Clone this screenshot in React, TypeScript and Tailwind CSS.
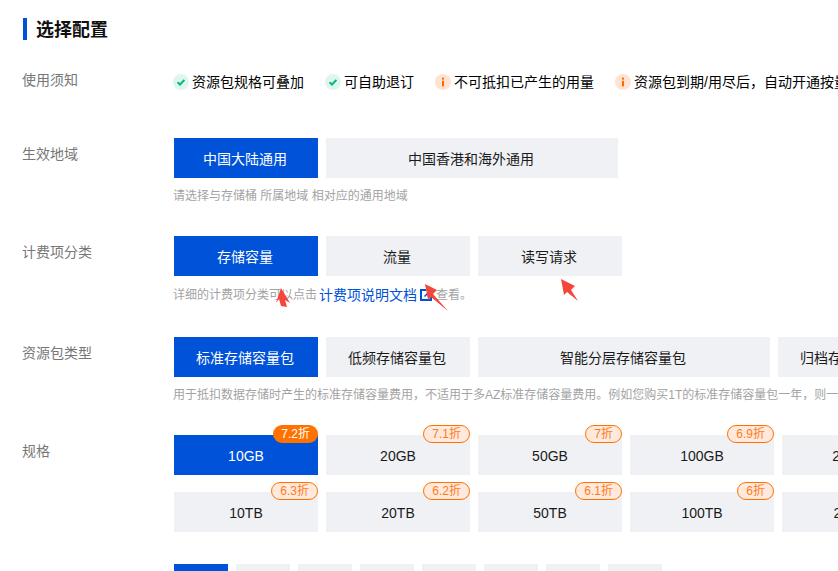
import React from 'react';

const NOTICES = [
  { text: '资源包规格可叠加', ok: true },
  { text: '可自助退订', ok: true },
  { text: '不可抵扣已产生的用量', ok: false },
  { text: '资源包到期/用尽后，自动开通按量计费', ok: false },
];

const SPECS = [
  [
    { name: '10GB', off: '7.2折' },
    { name: '20GB', off: '7.1折' },
    { name: '50GB', off: '7折' },
    { name: '100GB', off: '6.9折' },
    { name: '200GB', off: '' },
  ],
  [
    { name: '10TB', off: '6.3折' },
    { name: '20TB', off: '6.2折' },
    { name: '50TB', off: '6.1折' },
    { name: '100TB', off: '6折' },
    { name: '200TB', off: '' },
  ],
];

const NoticeIcon = ({ ok }: { ok: boolean }) => (
  <svg width="16" height="16" viewBox="0 0 16 16" className="shrink-0">
    <circle cx="8" cy="8" r="8" fill={ok ? '#dff6ee' : '#ffe3d2'} />
    {ok ? (
      <path d="M4.6 8.2l2.4 2.3 4.4-4.6" fill="none" stroke="#00b97c" strokeWidth="2" />
    ) : (
      <>
        <rect x="7" y="3.6" width="2" height="2" fill="#ff6a00" />
        <rect x="7" y="6.8" width="2" height="5.6" fill="#ff6a00" />
      </>
    )}
  </svg>
);

const Option = ({
  label,
  active,
  wide,
  badge,
}: {
  label: string;
  active?: boolean;
  wide?: boolean;
  badge?: string;
}) => (
  <div
    className={`relative shrink-0 h-10 pt-px flex items-center justify-center text-sm ${wide ? 'w-[292px]' : 'w-36'} ${
      badge === undefined ? 'pr-0.5' : ''
    } ${active ? 'bg-[#0052d9] text-white' : 'bg-[#f0f1f5] text-[#1a1a1a]'}`}
  >
    {label}
    {badge && (
      <span
        className={`absolute -top-2.5 right-0 h-[18px] px-2 rounded-full text-xs ${
          active ? 'bg-[#ff7200] text-white leading-[18px]' : 'border border-[#ff7200] bg-[#ffe9dc] text-[#ff7a1a] leading-4'
        }`}
      >
        {badge}
      </span>
    )}
  </div>
);

const Row = ({ label, className, children }: { label: string; className: string; children: React.ReactNode }) => (
  <div className={`flex ${className}`}>
    <div className="w-[152px] -ml-px shrink-0 pt-1.5 text-sm leading-5 text-[#777]">{label}</div>
    <div className="min-w-0 flex-1">{children}</div>
  </div>
);

const Hint = ({ children }: { children: React.ReactNode }) => (
  <div className="mt-[9px] -ml-px h-[18px] whitespace-nowrap text-xs leading-[18px] text-[#a3a3a3]">{children}</div>
);

export default function App() {
  return (
    <div className="relative w-[838px] h-[571px] overflow-hidden bg-white pl-[23px] pt-[18px] [font-family:'Liberation_Sans','Noto_Sans_CJK_SC',sans-serif]">
      <div className="flex h-[22px] items-center border-l-4 border-[#0052d9] pl-[9px] pt-0.5 text-lg font-bold text-[#111]">选择配置</div>

      <Row label="使用须知" className="mt-[24px] h-[74px]">
        <div className="flex items-center gap-[21px] whitespace-nowrap h-6 mt-1.5 -ml-px text-sm text-black">
          {NOTICES.map(n => (
            <div key={n.text} className="flex shrink-0 items-center gap-[3px]">
              <NoticeIcon ok={n.ok} />
              {n.text}
            </div>
          ))}
        </div>
      </Row>

      <Row label="生效地域" className="h-[98px]">
        <div className="flex gap-2">
          <Option label="中国大陆通用" active />
          <Option label="中国香港和海外通用" wide />
        </div>
        <Hint>请选择与存储桶 所属地域 相对应的通用地域</Hint>
      </Row>

      <Row label="计费项分类" className="h-[101px]">
        <div className="flex gap-2">
          <Option label="存储容量" active />
          <Option label="流量" />
          <Option label="读写请求" />
        </div>
        <div className="mt-[9px] -ml-px flex h-5 items-center whitespace-nowrap text-xs text-[#a3a3a3]">
          详细的计费项分类可以点击
          <span className="ml-0.5 text-sm text-[#0052d9]">计费项说明文档</span>
          <svg width="12" height="12" viewBox="0 0 12 12" className="ml-[3px] mr-1">
            <path d="M6 1H1v10h10V6" fill="none" stroke="#0052d9" strokeWidth="2" />
            <path d="M4.5 7.5L10 2M7 1h4v4" fill="none" stroke="#0052d9" strokeWidth="1.5" />
          </svg>
          查看。
        </div>
      </Row>

      <Row label="资源包类型" className="h-[98px]">
        <div className="flex gap-2">
          <Option label="标准存储容量包" active />
          <Option label="低频存储容量包" />
          <Option label="智能分层存储容量包" wide />
          <Option label="归档存储容量包" />
        </div>
        <Hint>用于抵扣数据存储时产生的标准存储容量费用，不适用于多AZ标准存储容量费用。例如您购买1T的标准存储容量包一年，则一年内可抵扣</Hint>
      </Row>

      <Row label="规格" className="h-[129px]">
        <div className="flex flex-col gap-[17px]">
          {SPECS.map((row, i) => (
            <div key={i} className="flex gap-2">
              {row.map((s, j) => (
                <Option key={s.name} label={s.name} badge={s.off} active={i === 0 && j === 0} />
              ))}
            </div>
          ))}
        </div>
      </Row>

      <div className="flex gap-2 pl-[151px]">
        {[0, 1, 2, 3, 4, 5, 6, 7].map(i => (
          <div key={i} className={`h-10 w-[54px] shrink-0 ${i === 0 ? 'bg-[#0052d9]' : 'bg-[#f0f1f5]'}`} />
        ))}
      </div>

      {/* red annotation arrows drawn on top of the screenshot */}
      <svg width="838" height="571" className="pointer-events-none absolute left-0 top-0">
        <g fill="#f5463c">
          <path d="M281 288L290 303L285 300L287 307L281 306L279 299L276 303Z" />
          <path d="M425 284L437 290L433 294L448 311L431 297L428 300Z" />
          <path d="M561 279L575 286L571 290L578 301L567 292L564 295Z" />
        </g>
      </svg>
    </div>
  );
}
